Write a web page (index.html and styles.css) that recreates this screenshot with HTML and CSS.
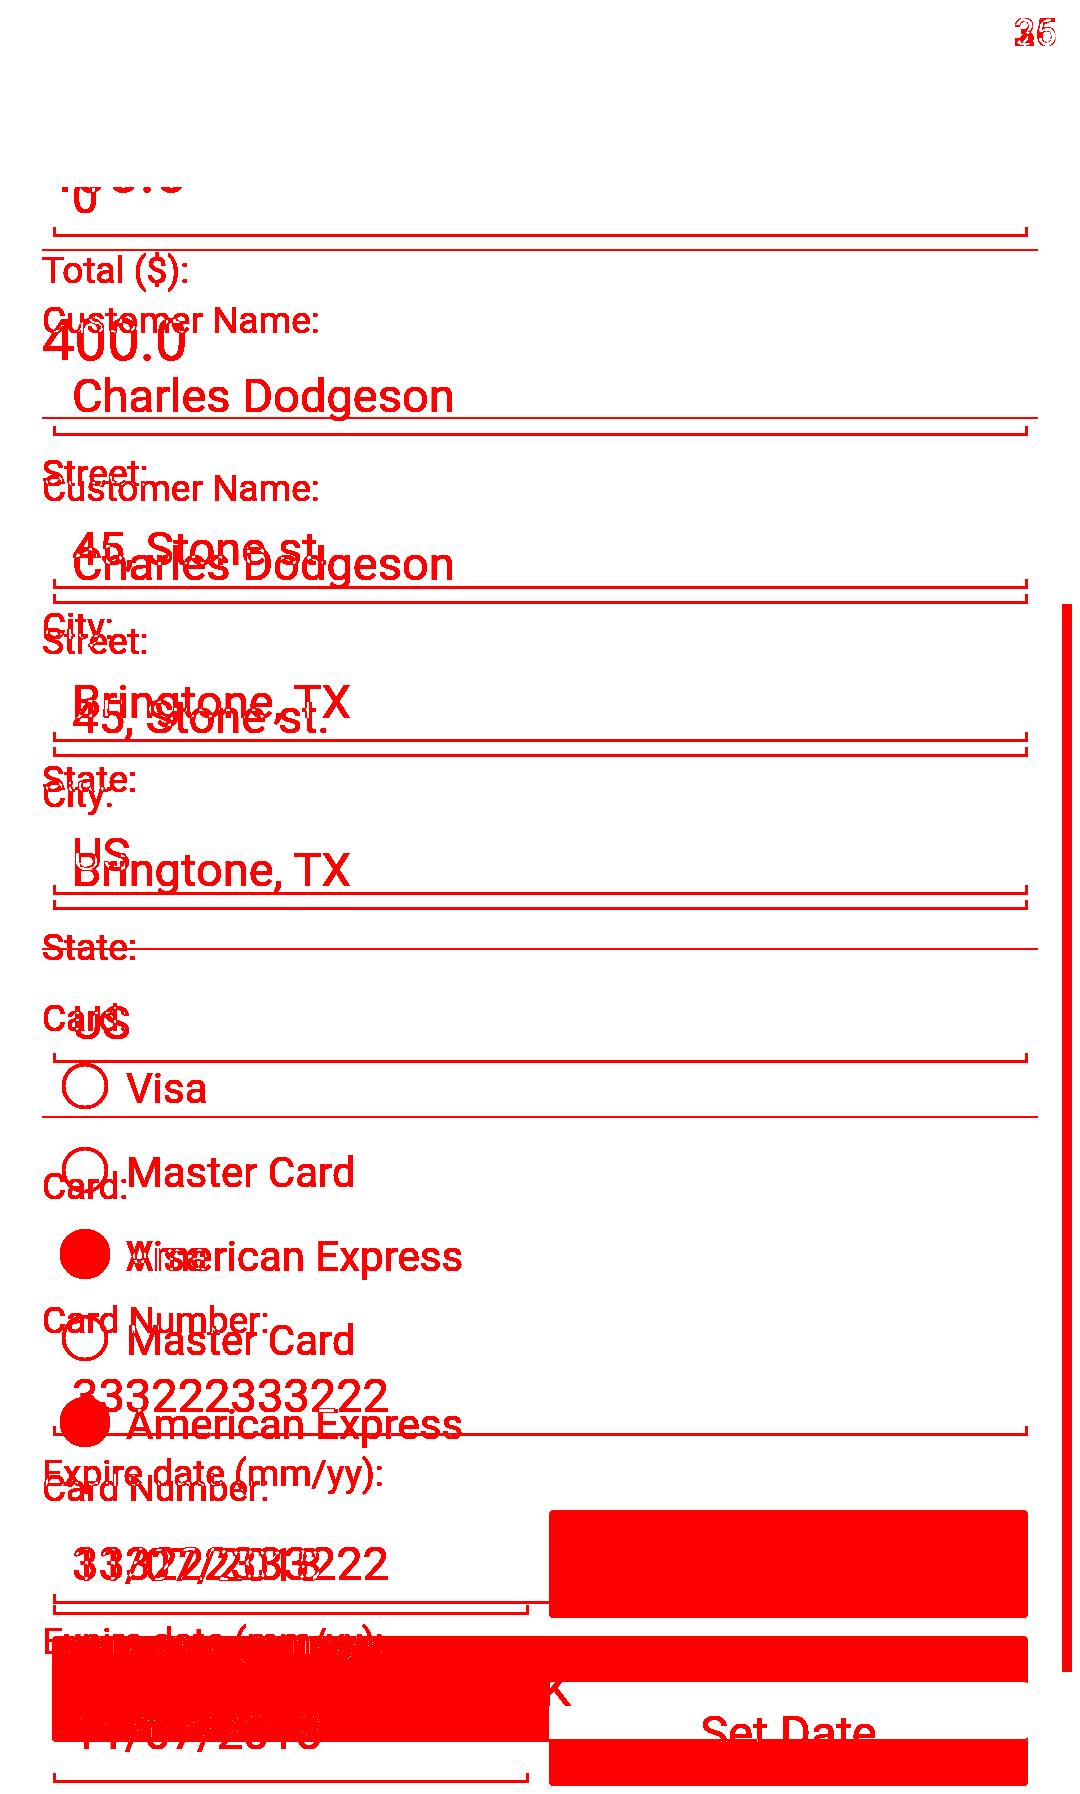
FILE: index.html
```html
<!DOCTYPE html>
<html lang="en">
<head>
<meta charset="utf-8">
<title>Payment form</title>
<link rel="stylesheet" href="styles.css">
</head>
<body>
<svg class="defs" aria-hidden="true">
  <filter id="diff" color-interpolation-filters="sRGB" x="0" y="0" width="1" height="1">
    <feColorMatrix type="matrix" values="0 0 0 0 1  -10 -10 -10 0 1  -10 -10 -10 0 1  0 0 0 0 1"/>
  </filter>
</svg>
<div class="screen">
  <section class="frame frame-a">
    <div class="statusbar"><span class="clock">25</span></div>
    <div class="toolbar"></div>
    <div class="viewport">
      <div class="form">
        <div class="input"><div class="value">0</div><div class="underline"></div></div>
        <div class="label label-total">Total ($):</div>
        <div class="total">400.0</div>
        <div class="divider divider-total"></div>
        <div class="field field-first"><div class="label">Customer Name:</div><div class="input"><div class="value">Charles Dodgeson</div><div class="underline"></div></div></div>
        <div class="field"><div class="label">Street:</div><div class="input"><div class="value">45, Stone st.</div><div class="underline"></div></div></div>
        <div class="field"><div class="label">City:</div><div class="input"><div class="value">Bringtone, TX</div><div class="underline"></div></div></div>
        <div class="field"><div class="label">State:</div><div class="input"><div class="value">US</div><div class="underline"></div></div></div>
        <div class="divider divider-card"></div>
        <div class="label label-card">Card:</div>
        <div class="radios">
          <div class="radio"><span class="radio-mark"><span class="ring"></span></span><span class="radio-text">Visa</span></div>
          <div class="radio"><span class="radio-mark"><span class="ring"></span></span><span class="radio-text">Master Card</span></div>
          <div class="radio"><span class="radio-mark"><span class="dot"></span></span><span class="radio-text">American Express</span></div>
        </div>
        <div class="field field-number"><div class="label">Card Number:</div><div class="input"><div class="value">333222333222</div><div class="underline"></div></div></div>
        <div class="label">Expire date (mm/yy):</div>
        <div class="expire-row">
          <div class="expire-input"><div class="value">11/07/2018</div><div class="underline"></div></div>
          <div class="btn btn-date">Set Date</div>
        </div>
        <div class="btn btn-ok">OK</div>
      </div>
    </div>
  </section>
  <section class="frame frame-b">
    <div class="statusbar"><span class="clock">36</span></div>
    <div class="toolbar"></div>
    <div class="viewport">
      <div class="form">
        <div class="input"><div class="value">0</div><div class="underline"></div></div>
        <div class="label label-total">Total ($):</div>
        <div class="total">400.0</div>
        <div class="divider divider-total"></div>
        <div class="field field-first"><div class="label">Customer Name:</div><div class="input"><div class="value">Charles Dodgeson</div><div class="underline"></div></div></div>
        <div class="field"><div class="label">Street:</div><div class="input"><div class="value">45, Stone st.</div><div class="underline"></div></div></div>
        <div class="field"><div class="label">City:</div><div class="input"><div class="value">Bringtone, TX</div><div class="underline"></div></div></div>
        <div class="field"><div class="label">State:</div><div class="input"><div class="value">US</div><div class="underline"></div></div></div>
        <div class="divider divider-card"></div>
        <div class="label label-card">Card:</div>
        <div class="radios">
          <div class="radio"><span class="radio-mark"><span class="ring"></span></span><span class="radio-text">Visa</span></div>
          <div class="radio"><span class="radio-mark"><span class="ring"></span></span><span class="radio-text">Master Card</span></div>
          <div class="radio"><span class="radio-mark"><span class="dot"></span></span><span class="radio-text">American Express</span></div>
        </div>
        <div class="field field-number"><div class="label">Card Number:</div><div class="input"><div class="value">333222333222</div><div class="underline"></div></div></div>
        <div class="label">Expire date (mm/yy):</div>
        <div class="expire-row">
          <div class="expire-input"><div class="value">11/07/2018</div><div class="underline"></div></div>
          <div class="btn btn-date">Set Date</div>
        </div>
        <div class="btn btn-ok">OK</div>
      </div>
      <div class="scrollbar"></div>
    </div>
  </section>
</div>
</body>
</html>
```

FILE: styles.css
```css
* {
  box-sizing: border-box;
  margin: 0;
  padding: 0;
}

html,
body {
  background: #fff;
}

body {
  width: 1080px;
  height: 1794px;
  overflow: hidden;
  font-family: Roboto, "Noto Sans", "Liberation Sans", sans-serif;
}

.defs {
  position: absolute;
  width: 0;
  height: 0;
}

.screen {
  position: relative;
  width: 1080px;
  height: 1794px;
  overflow: hidden;
  background: #fff;
  isolation: isolate;
  filter: url(#diff);
}

.frame {
  position: absolute;
  top: 0;
  left: 0;
  width: 1080px;
  height: 1794px;
  display: flex;
  flex-direction: column;
  background: #fff;
  color: #222;
}

.frame-b {
  mix-blend-mode: difference;
}

.statusbar {
  height: 63px;
  display: flex;
  justify-content: flex-end;
  padding: 4px 23px 0 0;
}

.clock {
  font-size: 38px;
  line-height: 59px;
  font-weight: 500;
}

.toolbar {
  height: 124px;
}

.viewport {
  position: relative;
  flex: 1;
  overflow: hidden;
}

.form {
  padding: 0 42px;
}

.frame-a .form {
  margin-top: -15px;
}

.frame-b .form {
  margin-top: -183px;
}

.label {
  font-size: 37px;
  line-height: 40px;
  height: 40px;
  white-space: nowrap;
}

.value {
  font-size: 47px;
  line-height: 50px;
  height: 50px;
  padding-left: 30px;
  white-space: nowrap;
}

.underline {
  height: 10px;
  margin: 5px 10px 0 11px;
  border: 3px solid #9a9a9a;
  border-top: 0;
}

.field {
  padding-bottom: 18px;
}

.field .input {
  margin-top: 30px;
}

.label-total {
  margin-top: 14px;
}

.total {
  font-size: 58px;
  line-height: 64px;
  height: 64px;
  margin-top: 17px;
}

.divider {
  height: 2px;
  background: #c8c8c8;
}

.divider-total {
  margin-top: 45px;
}

.field-first {
  margin-top: 50px;
}

.divider-card {
  margin-top: 35px;
}

.label-card {
  margin-top: 49px;
}

.radios {
  margin-top: 5px;
}

.radio {
  height: 84px;
  display: flex;
  align-items: center;
}

.radio-mark {
  width: 50px;
  height: 50px;
  margin-left: 18px;
  display: flex;
  align-items: center;
  justify-content: center;
}

.ring {
  width: 46px;
  height: 46px;
  border: 3px solid #808080;
  border-radius: 50%;
}

.dot {
  width: 50px;
  height: 50px;
  border-radius: 50%;
  background: #33b5e5;
}

.radio-text {
  font-size: 42px;
  line-height: 79px;
  height: 84px;
  padding-top: 5px;
  margin-left: 16px;
  white-space: nowrap;
}

.field-number {
  margin-top: 5px;
}

.expire-row {
  display: flex;
}

.expire-input {
  width: 498px;
  padding-top: 46px;
}

.expire-input .underline {
  margin: 15px 11px 0 11px;
}

.btn {
  height: 108px;
  border-radius: 5px;
  background: #d6d7d7;
  border-top: 4px solid #ececec;
  border-bottom: 3px solid #a8a8a8;
  display: flex;
  align-items: center;
  justify-content: center;
  font-size: 47px;
  color: #222;
  white-space: nowrap;
}

.btn-date {
  flex: 1;
  margin: 16px 10px 0 9px;
}

.btn-ok {
  height: 106px;
  margin: 18px 10px 0 10px;
}

.scrollbar {
  position: absolute;
  top: 417px;
  right: 8px;
  width: 10px;
  height: 1068px;
  background: #888;
}
```
